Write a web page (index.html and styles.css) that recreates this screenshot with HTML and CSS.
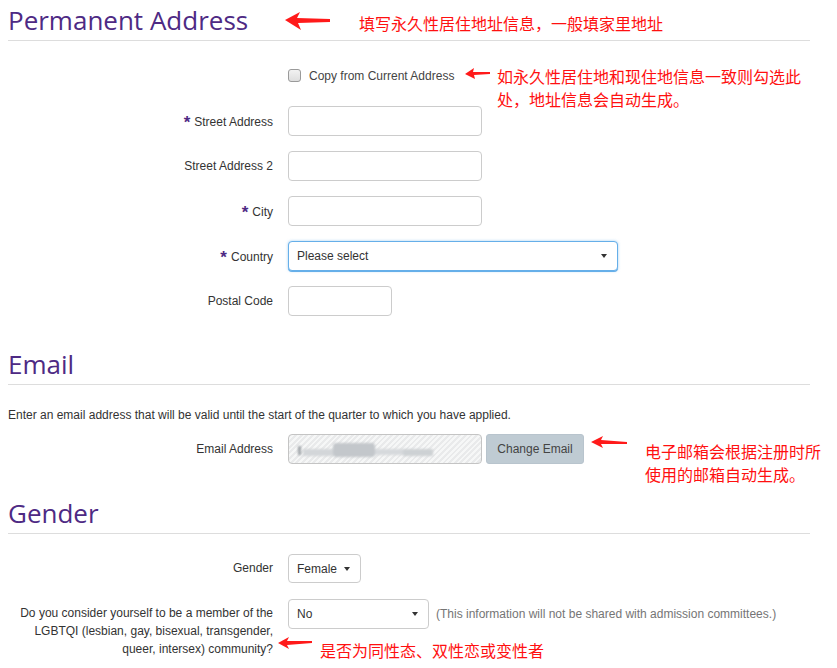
FILE: index.html
```html
<!DOCTYPE html>
<html lang="en">
<head>
<meta charset="utf-8">
<title>Application - Address, Email, Gender</title>
<link rel="stylesheet" href="styles.css">
</head>
<body>
<div class="page">
  <section class="section">
    <h2 class="section-title">Permanent Address</h2>
    <div class="row row-check">
      <div class="label"></div>
      <label class="check"><span class="checkbox"></span>Copy from Current Address</label>
    </div>
    <div class="row">
      <div class="label"><span class="req">*</span>Street Address</div>
      <div class="input w-std"></div>
    </div>
    <div class="row">
      <div class="label">Street Address 2</div>
      <div class="input w-std"></div>
    </div>
    <div class="row">
      <div class="label"><span class="req">*</span>City</div>
      <div class="input w-std"></div>
    </div>
    <div class="row">
      <div class="label"><span class="req">*</span>Country</div>
      <div class="input select focus w-wide"><span>Please select</span><span class="caret"></span></div>
    </div>
    <div class="row">
      <div class="label">Postal Code</div>
      <div class="input w-short"></div>
    </div>
  </section>

  <section class="section sec-email">
    <h2 class="section-title">Email</h2>
    <p class="intro">Enter an email address that will be valid until the start of the quarter to which you have applied.</p>
    <div class="row row-email">
      <div class="label">Email Address</div>
      <div class="input disabled w-std">
        <div class="blur">
          <span class="b b1"></span><span class="b b2"></span><span class="b b3"></span><span class="b b4"></span><span class="b b5"></span>
        </div>
      </div>
      <button class="btn">Change Email</button>
    </div>
  </section>

  <section class="section sec-gender">
    <h2 class="section-title">Gender</h2>
    <div class="row row-gender">
      <div class="label">Gender</div>
      <div class="input select w-gender"><span>Female</span><span class="caret"></span></div>
    </div>
    <div class="row row-top">
      <div class="label label-multi">Do you consider yourself to be a member of the LGBTQI (lesbian, gay, bisexual, transgender, queer, intersex) community?</div>
      <div class="input select w-lgbt"><span>No</span><span class="caret"></span></div>
      <div class="help">(This information will not be shared with admission committees.)</div>
    </div>
  </section>

  <div class="notes">
    <svg class="arrow a1" width="46" height="20" viewBox="0 0 46 20"><polygon points="0,9 15,1 12,7 45,8 45,11 13,12 16,19"/></svg>
    <div class="note-text t1">填写永久性居住地址信息，一般填家里地址</div>

    <svg class="arrow a2" width="26" height="13" viewBox="0 0 26 13"><polygon points="0,7 9,1 8,5 25,5 25,7 9,8 10,12"/></svg>
    <div class="note-text t2">如永久性居住地和现住地信息一致则勾选此<br>处，地址信息会自动生成。</div>

    <svg class="arrow a3" width="37" height="13" viewBox="0 0 37 13"><polygon points="0,6 12,0 10,4 36,6 36,8 10,8 12,12"/></svg>
    <div class="note-text t3">电子邮箱会根据注册时所<br>使用的邮箱自动生成。</div>

    <svg class="arrow a4" width="35" height="12" viewBox="0 0 35 12"><polygon points="0,6 11,0 9,4 34,4 34,6 9,8 11,12"/></svg>
    <div class="note-text t4">是否为同性态、双性恋或变性者</div>
  </div>
</div>
</body>
</html>
```

FILE: styles.css
```css
* { box-sizing: border-box; }

html, body {
  margin: 0;
  padding: 0;
  background: #ffffff;
}

body {
  font-family: "Liberation Sans", Arial, sans-serif;
  font-size: 12px;
  color: #333333;
}

.page {
  position: relative;
  width: 837px;
  height: 668px;
  padding: 4px 0 0 8px;
  overflow: hidden;
}

.section {
  width: 802px;
}

.sec-email { margin-top: 32px; }
.sec-gender { margin-top: 33px; }

.section-title {
  margin: 0;
  font-family: "Open Sans", "Noto Sans", sans-serif;
  font-weight: 400;
  font-size: 26px;
  line-height: 32px;
  color: #4e2a84;
  padding-bottom: 4px;
  border-bottom: 1px solid #dddddd;
}

.row {
  display: flex;
  align-items: center;
  min-height: 30px;
  margin-top: 15px;
}

.row-check { margin-top: 19px; min-height: 31px; }
.row-email { margin-top: 10px; }
.row-gender { margin-top: 20px; min-height: 29px; }
.row-top { align-items: flex-start; margin-top: 16px; }

.label {
  width: 265px;
  flex: none;
  margin-right: 15px;
  text-align: right;
  color: #333333;
  line-height: 17px;
}

.label-multi {
  padding-top: 5px;
  line-height: 18px;
}

.req {
  color: #4e2a84;
  font-size: 17px;
  font-weight: 700;
  margin-right: 4px;
  position: relative;
  top: 2px;
}

.check {
  display: flex;
  align-items: center;
  color: #444444;
}

.checkbox {
  width: 13px;
  height: 13px;
  border: 1px solid #9a9a9a;
  border-radius: 3px;
  background: linear-gradient(#f2f2f2, #dedede);
  margin-right: 8px;
}

.input {
  height: 30px;
  border: 1px solid #cccccc;
  border-radius: 4px;
  background: #ffffff;
  flex: none;
}

.w-std { width: 194px; }
.w-wide { width: 330px; }
.w-short { width: 104px; }
.w-gender { width: 73px; height: 29px; }
.w-lgbt { width: 141px; }

.select {
  display: flex;
  align-items: center;
  justify-content: space-between;
  padding: 0 10px 0 8px;
  color: #333333;
}

.focus {
  border-color: #66afe9;
  box-shadow: 0 1px 0 #66afe9, 0 0 3px rgba(102, 175, 233, 0.6);
}

.caret {
  width: 0;
  height: 0;
  border-left: 3px solid transparent;
  border-right: 3px solid transparent;
  border-top: 4px solid #333333;
}

.w-gender .caret { margin-left: 6px; }

.intro {
  margin: 22px 0 0 0;
  line-height: 17px;
  color: #333333;
}

.disabled {
  position: relative;
  border-color: #c4c4c4;
  background: repeating-linear-gradient(135deg, #e9eaeb 0, #e9eaeb 2px, #f6f7f7 2px, #f6f7f7 4px);
}

.blur {
  position: absolute;
  left: 9px;
  top: 8px;
  display: flex;
  align-items: center;
  filter: blur(1.2px);
}

.b { display: block; }
.b1 { width: 3px; height: 9px; background: #9ea3a8; margin-right: 2px; }
.b2 { width: 30px; height: 7px; background: #d3d6d9; margin-top: 4px; }
.b3 { width: 42px; height: 14px; background: #c3c7cb; border-radius: 3px; }
.b4 { width: 28px; height: 6px; background: #d6d9dc; margin-top: 3px; }
.b5 { width: 30px; height: 7px; background: #cdd1d4; margin-top: 4px; }

.btn {
  height: 30px;
  width: 98px;
  margin-left: 4px;
  border: 1px solid #b8c4cd;
  border-radius: 3px;
  background: #bfcbd3;
  color: #444444;
  font-family: "Liberation Sans", Arial, sans-serif;
  font-size: 12px;
  padding: 0;
}

.help {
  margin-left: 7px;
  line-height: 30px;
  color: #757575;
}

/* Annotation overlay (drawn on top of the screenshot) */
.notes {
  position: absolute;
  left: 0;
  top: 0;
  width: 837px;
  height: 668px;
  pointer-events: none;
  color: #ff1010;
  font-family: "Noto Sans CJK SC", "Microsoft YaHei", sans-serif;
  font-size: 16px;
}

.arrow { position: absolute; fill: #ff1a1a; }

.note-text {
  position: absolute;
  white-space: nowrap;
  line-height: 23px;
}

.a1 { left: 285px; top: 11px; }
.t1 { left: 359px; top: 12px; }

.a2 { left: 465px; top: 67px; }
.t2 { left: 497px; top: 65px; }

.a3 { left: 591px; top: 436px; }
.t3 { left: 645px; top: 440px; }

.a4 { left: 278px; top: 637px; }
.t4 { left: 320px; top: 639px; }
```
